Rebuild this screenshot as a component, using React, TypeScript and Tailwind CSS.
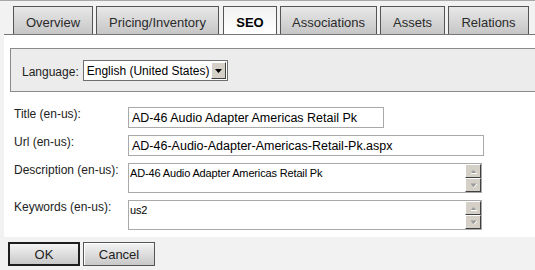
const TABS = [
  { label: "Overview", cls: "ml-0 w-[80px]", active: false },
  { label: "Pricing/Inventory", cls: "ml-[3px] w-[123px]", active: false },
  { label: "SEO", cls: "ml-[4px] w-[54px]", active: true },
  { label: "Associations", cls: "ml-[3px] w-[97px]", active: false },
  { label: "Assets", cls: "ml-[3px] w-[65px]", active: false },
  { label: "Relations", cls: "ml-[3px] w-[81px]", active: false },
];

function ScrollBtn({ up }: { up: boolean }) {
  return (
    <div className="flex h-[14px] w-[16px] items-center justify-center border border-t-white border-l-white border-r-[#404040] border-b-[#404040] bg-[#d4d0c8]">
      <svg width="7" height="5" viewBox="0 0 7 5">
        {up ? (
          <>
            <path d="M0.5 4.5 L3.5 1 L6.5 4.5 Z" fill="#9a9a9a" />
            <path d="M1 4.5 H7" stroke="#ffffff" strokeWidth="1" />
          </>
        ) : (
          <>
            <path d="M0.5 0.5 L3.5 4 L6.5 0.5 Z" fill="#9a9a9a" />
            <path d="M4 4.5 L7 1" stroke="#ffffff" strokeWidth="1" />
          </>
        )}
      </svg>
    </div>
  );
}

function TextBox({ value, wide }: { value: string; wide: boolean }) {
  return (
    <div
      className={
        "flex h-[21px] items-center border border-[#a9a9a9] bg-white pl-[3px] text-[12.5px] leading-[14px] text-black " +
        (wide ? "w-[356px]" : "w-[256px]")
      }
    >
      {value}
    </div>
  );
}

function TextArea({ value }: { value: string }) {
  return (
    <div className="flex h-[30px] w-[354px] border border-[#a9a9a9] bg-white">
      <div className="flex-1 pl-[1px] pt-[3px] text-[11px] leading-[13px] tracking-[-0.15px] text-black">
        {value}
      </div>
      <div className="flex flex-col">
        <ScrollBtn up />
        <ScrollBtn up={false} />
      </div>
    </div>
  );
}

function Row({ label, children, first }: { label: string; children: React.ReactNode; first?: boolean }) {
  return (
    <div className={"flex " + (first ? "mt-[15px]" : "mt-[7px]")}>
      <div className="w-[114px] pt-[1px] text-[12px] leading-[12px] text-[#222]">{label}</div>
      {children}
    </div>
  );
}

export default function App() {
  return (
    <div
      className="h-[270px] w-[535px] overflow-hidden bg-[#f2f2f2]"
      style={{ fontFamily: '"Liberation Sans", Arial, sans-serif' }}
    >
      <div className="h-[1px] bg-[#a8a8a8]" />
      {/* tab strip */}
      <div className="ml-[4px] flex border-b border-[#777] pl-[9px] pt-[5px]">
        {TABS.map((t) => (
          <div
            key={t.label}
            className={
              "h-[28px] border border-b-0 border-[#555] pt-[9px] text-center text-[13px] leading-[13px] " +
              t.cls +
              (t.active
                ? " bg-gradient-to-b from-[#f2f2f2] to-white font-bold text-black"
                : " bg-gradient-to-b from-[#e8e8e8] to-[#c6c6c6] text-[#2a2a2a]")
            }
          >
            {t.label}
          </div>
        ))}
      </div>

      {/* panel */}
      <div className="ml-[4px] bg-white pb-[7px] pl-[6px] pt-[13px]">
        <div className="flex h-[44px] w-[540px] items-end border border-[#8a8a8a] bg-[#ececec] pb-[10px] pl-[11px]">
          <span className="mb-[3px] mr-[4px] text-[12px] leading-[12px] text-[#222]">Language:</span>
          <div className="flex h-[21px] w-[145px] items-center border border-[#6e6e6e] bg-white pl-[3px] pr-[1px]">
            <span className="flex-1 text-[12px] leading-[14px] text-black">English (United States)</span>
            <div className="flex h-[17px] w-[15px] items-center justify-center border border-t-white border-l-white border-r-[#404040] border-b-[#404040] bg-[#d4d0c8]">
              <svg width="7" height="4" viewBox="0 0 7 4">
                <path d="M0 0 H7 L3.5 4 Z" fill="#000" />
              </svg>
            </div>
          </div>
        </div>

        <div className="pl-[4px]">
          <Row label="Title (en-us):" first>
            <TextBox value="AD-46 Audio Adapter Americas Retail Pk" wide={false} />
          </Row>
          <Row label="Url (en-us):">
            <TextBox value="AD-46-Audio-Adapter-Americas-Retail-Pk.aspx" wide />
          </Row>
          <Row label="Description (en-us):">
            <TextArea value="AD-46 Audio Adapter Americas Retail Pk" />
          </Row>
          <Row label="Keywords (en-us):">
            <TextArea value="us2" />
          </Row>
        </div>
      </div>

      {/* buttons */}
      <div className="flex gap-[3px] pl-[8px] pt-[5px]">
        <button className="h-[24px] w-[72px] border-2 border-[#1e1e1e] bg-gradient-to-b from-[#f4f4f4] to-[#c8c8c8] text-[13px] leading-[13px] text-[#222]">
          OK
        </button>
        <button className="h-[24px] w-[72px] border border-[#555] bg-gradient-to-b from-[#f4f4f4] to-[#c8c8c8] text-[13px] leading-[13px] text-[#222] shadow-[inset_1px_1px_0_#fff]">
          Cancel
        </button>
      </div>
    </div>
  );
}
